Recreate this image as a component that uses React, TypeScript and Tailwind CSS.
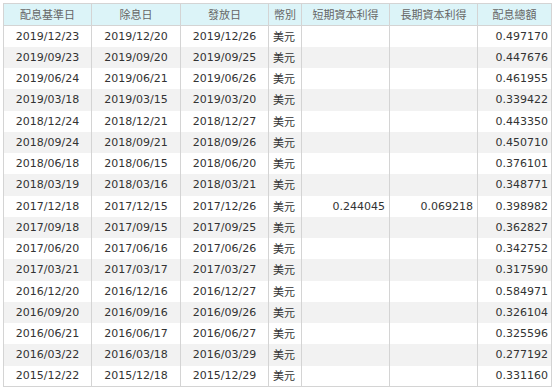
import React from 'react';

type Row = {
  base: string;
  exDiv: string;
  pay: string;
  cur: string;
  shortGain?: string;
  longGain?: string;
  total: string;
};

const rows: Row[] = [
  { base: '2019/12/23', exDiv: '2019/12/20', pay: '2019/12/26', cur: '美元', total: '0.497170' },
  { base: '2019/09/23', exDiv: '2019/09/20', pay: '2019/09/25', cur: '美元', total: '0.447676' },
  { base: '2019/06/24', exDiv: '2019/06/21', pay: '2019/06/26', cur: '美元', total: '0.461955' },
  { base: '2019/03/18', exDiv: '2019/03/15', pay: '2019/03/20', cur: '美元', total: '0.339422' },
  { base: '2018/12/24', exDiv: '2018/12/21', pay: '2018/12/27', cur: '美元', total: '0.443350' },
  { base: '2018/09/24', exDiv: '2018/09/21', pay: '2018/09/26', cur: '美元', total: '0.450710' },
  { base: '2018/06/18', exDiv: '2018/06/15', pay: '2018/06/20', cur: '美元', total: '0.376101' },
  { base: '2018/03/19', exDiv: '2018/03/16', pay: '2018/03/21', cur: '美元', total: '0.348771' },
  { base: '2017/12/18', exDiv: '2017/12/15', pay: '2017/12/26', cur: '美元', shortGain: '0.244045', longGain: '0.069218', total: '0.398982' },
  { base: '2017/09/18', exDiv: '2017/09/15', pay: '2017/09/25', cur: '美元', total: '0.362827' },
  { base: '2017/06/20', exDiv: '2017/06/16', pay: '2017/06/26', cur: '美元', total: '0.342752' },
  { base: '2017/03/21', exDiv: '2017/03/17', pay: '2017/03/27', cur: '美元', total: '0.317590' },
  { base: '2016/12/20', exDiv: '2016/12/16', pay: '2016/12/27', cur: '美元', total: '0.584971' },
  { base: '2016/09/20', exDiv: '2016/09/16', pay: '2016/09/26', cur: '美元', total: '0.326104' },
  { base: '2016/06/21', exDiv: '2016/06/17', pay: '2016/06/27', cur: '美元', total: '0.325596' },
  { base: '2016/03/22', exDiv: '2016/03/18', pay: '2016/03/29', cur: '美元', total: '0.277192' },
  { base: '2015/12/22', exDiv: '2015/12/18', pay: '2015/12/29', cur: '美元', total: '0.331160' },
];

const headers = ['配息基準日', '除息日', '發放日', '幣別', '短期資本利得', '長期資本利得', '配息總額'];
const widths = ['w-[88px]', 'w-[89px]', 'w-[88px]', 'w-[33px]', 'w-[88px]', 'w-[88px]', 'w-[74px]'];

export default function App() {
  return (
    <div className="bg-white pt-[3px] pl-[3px] w-[554px] h-[390px]">
      <table
        className="table-fixed border-collapse w-[548px] text-[11px] text-[#333] leading-none"
        style={{ fontFamily: '"DejaVu Sans", "Noto Sans CJK TC", sans-serif' }}
      >
        <colgroup>
          {widths.map((w, i) => (
            <col key={i} className={w} />
          ))}
        </colgroup>
        <thead>
          <tr className="bg-[#dcf4f8] h-[22px]">
            {headers.map((h, i) => (
              <th
                key={i}
                className="border border-[#d4d4d4] font-normal text-[#666] text-center px-0 whitespace-nowrap"
                style={{ fontFamily: '"Noto Sans CJK TC", sans-serif' }}
              >
                {h}
              </th>
            ))}
          </tr>
        </thead>
        <tbody>
          {rows.map((r, i) => (
            <tr key={i} className={`h-[21.25px] ${i % 2 === 1 ? 'bg-[#f2f2f2]' : 'bg-white'}`}>
              <td className="border-x border-[#d4d4d4] text-center">{r.base}</td>
              <td className="border-x border-[#d4d4d4] text-center">{r.exDiv}</td>
              <td className="border-x border-[#d4d4d4] text-center">{r.pay}</td>
              <td
                className="border-x border-[#d4d4d4] text-left pl-[4px] whitespace-nowrap"
                style={{ fontFamily: '"Noto Sans CJK TC", sans-serif' }}
              >
                {r.cur}
              </td>
              <td className="border-x border-[#d4d4d4] text-right pr-[4px]">{r.shortGain ?? ''}</td>
              <td className="border-x border-[#d4d4d4] text-right pr-[4px]">{r.longGain ?? ''}</td>
              <td className="border-x border-[#d4d4d4] text-right pr-[3px]">{r.total}</td>
            </tr>
          ))}
        </tbody>
        <tfoot>
          <tr>
            <td colSpan={7} className="border-t border-[#d4d4d4] h-0 p-0" />
          </tr>
        </tfoot>
      </table>
    </div>
  );
}
